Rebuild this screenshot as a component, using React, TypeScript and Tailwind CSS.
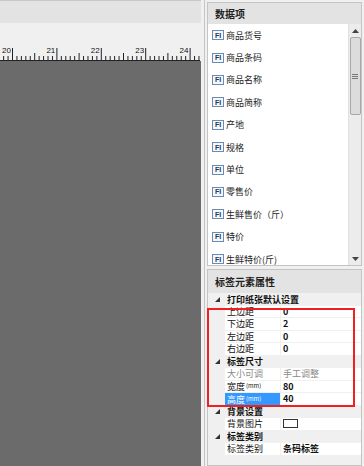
import React from 'react';

const font = { fontFamily: '"Noto Sans CJK SC", "Liberation Sans", sans-serif' };

const dataItems = [
  '商品货号',
  '商品条码',
  '商品名称',
  '商品简称',
  '产地',
  '规格',
  '单位',
  '零售价',
  '生鲜售价（斤）',
  '特价',
  '生鲜特价(斤)',
];

function Ruler() {
  const ticks: React.ReactNode[] = [];
  const start = 12;
  const unit = 44.4;
  for (let i = -2; i < 45; i++) {
    const x = start + (unit / 10) * i;
    if (x < 0 || x > 199) continue;
    const m = ((i % 10) + 10) % 10;
    const h = m === 0 ? 12 : m === 5 ? 7 : 4;
    ticks.push(<line key={i} x1={x + 0.5} x2={x + 0.5} y1={37 - h} y2={37} stroke="#222" strokeWidth={1} />);
  }
  return (
    <div className="relative h-[38px] bg-[#f0f0f0]">
      <svg width="200" height="38" className="absolute left-0 top-0">
        {ticks}
        <line x1={0} x2={200} y1={37.5} y2={37.5} stroke="#222" strokeWidth={1} />
      </svg>
      {[20, 21, 22, 23, 24].map((n, k) => (
        <span
          key={n}
          className="absolute top-[24px] text-[8px] leading-[8px] text-[#111]"
          style={{ left: 12 + 44.4 * k - 10, fontFamily: '"Liberation Sans", sans-serif' }}
        >
          {n}
        </span>
      ))}
    </div>
  );
}

function FiIcon() {
  return (
    <span
      className="flex h-[10px] w-[12px] items-center justify-center border border-[#6a8cb4] bg-[#f4f7fb] text-[7px] font-bold leading-none text-[#1d3a66]"
      style={{ fontFamily: '"Liberation Sans", sans-serif' }}
    >
      FI
    </span>
  );
}

function Scrollbar() {
  return (
    <div className="flex w-[13px] flex-col items-center border-l border-[#e0e0e0] bg-[#ececec]">
      <div className="flex h-[13px] items-center justify-center">
        <svg width="7" height="4"><polygon points="3.5,0 7,4 0,4" fill="#444" /></svg>
      </div>
      <div className="flex h-[78px] w-[11px] items-center justify-center rounded-[2px] border border-[#a8a8a8] bg-[#dcdcdc]">
        <div className="flex flex-col gap-[1px]">
          <div className="h-px w-[6px] bg-[#777]" />
          <div className="h-px w-[6px] bg-[#777]" />
          <div className="h-px w-[6px] bg-[#777]" />
        </div>
      </div>
      <div className="flex-1" />
      <div className="flex h-[13px] items-center justify-center">
        <svg width="7" height="4"><polygon points="0,0 7,0 3.5,4" fill="#444" /></svg>
      </div>
    </div>
  );
}

function Triangle() {
  return (
    <svg width="5" height="5"><polygon points="5,0 5,5 0,5" fill="#333" /></svg>
  );
}

function Category({ title }: { title: string }) {
  return (
    <div className="flex h-[12.5px] items-center bg-[#f0f0f0]">
      <div className="flex w-[17px] items-center justify-center pl-[1px]">
        <Triangle />
      </div>
      <span className="pl-[2px] text-[9px] font-bold leading-none text-[#111]">{title}</span>
    </div>
  );
}

type PropRowProps = {
  name: React.ReactNode;
  value?: React.ReactNode;
  disabled?: boolean;
  selected?: boolean;
};

function PropRow({ name, value, disabled, selected }: PropRowProps) {
  return (
    <div className="flex h-[12.5px] bg-[#f0f0f0]">
      <div className="w-[17px]" />
      <div
        className={
          selected
            ? 'flex w-[55px] items-center bg-[#3399ff] pl-[2px] text-[9px] leading-none text-white'
            : 'flex w-[55px] items-center border-b border-[#f0f0f0] bg-white pl-[2px] text-[9px] leading-none ' +
              (disabled ? 'text-[#8a8a8a]' : 'text-[#111]')
        }
      >
        {name}
      </div>
      <div className="w-px bg-[#f0f0f0]" />
      <div
        className={
          'flex flex-1 items-center border-b border-[#f0f0f0] bg-white pl-[2px] text-[9px] leading-none ' +
          (disabled ? 'text-[#8a8a8a]' : 'font-bold text-[#111]')
        }
      >
        {value}
      </div>
    </div>
  );
}

function Mm({ label }: { label: string }) {
  return (
    <>
      {label}
      <span className="ml-[1px] text-[6px]">(mm)</span>
    </>
  );
}

export default function App() {
  return (
    <div className="relative flex h-[466px] w-[364px] overflow-hidden bg-[#f0f0f0]" style={font}>
      <div className="flex w-[201px] flex-col">
        <div className="h-[23px] border-t border-[#c8c8c8] bg-[#e3e3e3]" />
        <Ruler />
        <div className="flex-1 bg-[#6b6b6b]" />
      </div>

      <div className="flex w-[6px]">
        <div className="w-[3px] bg-[#f0f0f0]" />
        <div className="w-px bg-[#c4c4c4]" />
        <div className="w-[2px] bg-[#f0f0f0]" />
      </div>

      <div className="flex w-[157px] flex-col pr-[2px]">
        <div className="mt-[2px] flex h-[264px] flex-col border border-[#c4c4c4]">
          <div className="flex h-[21px] items-center bg-[#e3e3e3] pl-[7px] text-[10px] font-bold text-[#222]">数据项</div>
          <div className="flex flex-1 overflow-hidden bg-white">
            <div className="flex-1">
              {dataItems.map((item) => (
                <div key={item} className="flex h-[22.4px] items-center gap-[2px] pl-[4px]">
                  <FiIcon />
                  <span className="text-[9px] leading-none text-[#222]">{item}</span>
                </div>
              ))}
            </div>
            <Scrollbar />
          </div>
        </div>

        <div className="mt-[3px] flex flex-1 flex-col border border-[#c4c4c4]">
          <div className="flex h-[23px] items-center bg-[#e3e3e3] pl-[7px] text-[10px] font-semibold text-[#222]">标签元素属性</div>
          <div className="flex-1 bg-[#f0f0f0]">
            <Category title="打印纸张默认设置" />
            <PropRow name="上边距" value="0" />
            <PropRow name="下边距" value="2" />
            <PropRow name="左边距" value="0" />
            <PropRow name="右边距" value="0" />
            <Category title="标签尺寸" />
            <PropRow name="大小可调" value="手工调整" disabled />
            <PropRow name={<Mm label="宽度" />} value="80" />
            <PropRow name={<Mm label="高度" />} value="40" selected />
            <Category title="背景设置" />
            <PropRow
              name="背景图片"
              value={<span className="block h-[9px] w-[15px] border border-[#333] bg-white" />}
            />
            <Category title="标签类别" />
            <PropRow name="标签类别" value="条码标签" />
          </div>
        </div>
      </div>

      <div className="absolute left-[207px] top-[308px] h-[99px] w-[148px] border-2 border-[#f02020]" />
    </div>
  );
}
